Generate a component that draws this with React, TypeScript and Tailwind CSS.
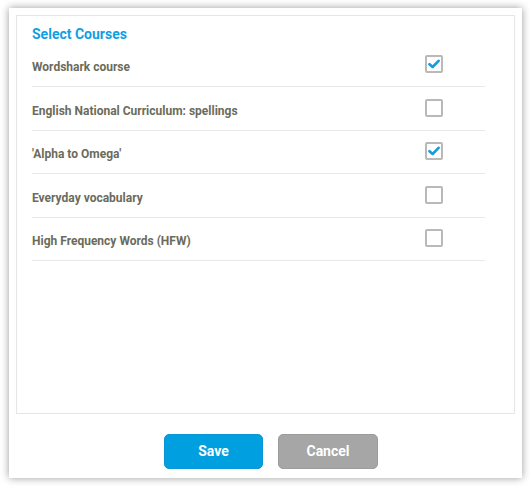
const courses = [
  { name: "Wordshark course", checked: true },
  { name: "English National Curriculum: spellings", checked: false },
  { name: "'Alpha to Omega'", checked: true },
  { name: "Everyday vocabulary", checked: false },
  { name: "High Frequency Words (HFW)", checked: false },
];

const CheckBox = ({ checked }: { checked: boolean }) => (
  <div className="mb-[1px] flex h-[18px] w-[18px] items-center justify-center rounded-[2px] border-2 border-[#b9b9b9] bg-white">
    {checked && (
      <svg width="12" height="10" viewBox="0 0 12 10">
        <path
          d="M1.5 5.2 L4.6 8 L10.6 1.8"
          fill="none"
          stroke="#139de0"
          strokeWidth="2.6"
          strokeLinecap="round"
          strokeLinejoin="round"
        />
      </svg>
    )}
  </div>
);

export default function App() {
  return (
    <div
      className="h-[486px] w-[530px] bg-white pl-[9px] pt-[8px]"
      style={{ fontFamily: "Roboto, 'Liberation Sans', sans-serif" }}
    >
      <div className="flex h-[470px] w-[513px] flex-col bg-white px-[7px] pt-[7px] shadow-[0_0_8px_rgba(0,0,0,0.4)]">
        <div className="h-[399px] border border-[#e6e6e6] pl-[15px] pr-[29px]">
          <h2 className="pt-[7.5px] text-[14px] font-bold leading-[20px] text-[#109fe3]">
            Select Courses
          </h2>
          <ul>
            {courses.map((course) => (
              <li
                key={course.name}
                className="flex h-[43.5px] items-center justify-between border-b border-[#e8e8e8] pr-[42px]"
              >
                <span className="mt-[5px] text-[12px] font-bold text-[#6b6b5b]">
                  {course.name}
                </span>
                <CheckBox checked={course.checked} />
              </li>
            ))}
          </ul>
        </div>
        <div className="flex justify-center gap-[15px] pl-[11px] pt-[20px]">
          <button className="h-[35px] w-[99px] rounded-[5px] border border-[#0b95d6] bg-[#009fe0] text-[14px] font-bold text-white">
            Save
          </button>
          <button className="h-[35px] w-[100px] rounded-[5px] border border-[#9c9c9c] bg-[#a6a6a6] text-[14px] font-bold text-white">
            Cancel
          </button>
        </div>
      </div>
    </div>
  );
}
